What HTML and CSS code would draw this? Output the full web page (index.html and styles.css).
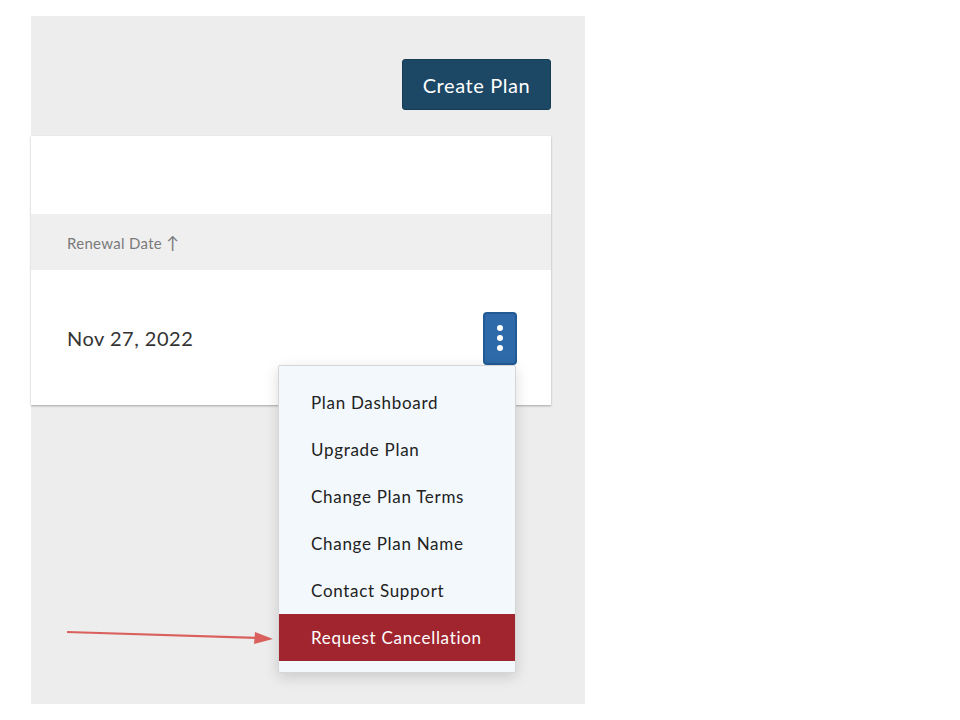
FILE: index.html
```html
<!DOCTYPE html>
<html lang="en">
<head>
    <meta charset="UTF-8">
    <meta name="viewport" content="width=device-width, initial-scale=1.0">
    <title>Plans</title>
    <link rel="stylesheet" href="styles.css">
</head>
<body>
    <div class="panel">
        <div class="toolbar">
            <button type="button" class="btn-create">Create Plan</button>
        </div>
        <div class="card">
            <div class="card-top"></div>
            <div class="head-row">
                <span class="col-date">Renewal Date <span class="sort">&#8593;</span></span>
            </div>
            <div class="body-row">
                <span class="date">Nov 27, 2022</span>
                <button type="button" class="kebab" aria-label="Actions">
                    <span class="dot"></span>
                    <span class="dot"></span>
                    <span class="dot"></span>
                </button>
                <ul class="menu">
                    <li class="menu-item">Plan Dashboard</li>
                    <li class="menu-item">Upgrade Plan</li>
                    <li class="menu-item">Change Plan Terms</li>
                    <li class="menu-item">Change Plan Name</li>
                    <li class="menu-item">Contact Support</li>
                    <li class="menu-item danger">Request Cancellation</li>
                </ul>
            </div>
        </div>
        <!-- annotation arrow -->
        <svg class="arrow" width="210" height="16" viewBox="0 0 210 16">
            <line x1="0" y1="3" x2="192" y2="9" stroke="#d9605c" stroke-width="2.2"/>
            <polygon points="188,3 206,10 187,15" fill="#d9605c"/>
        </svg>
    </div>
</body>
</html>
```

FILE: styles.css
```css
body{
    margin: 0;
    background: #fff;
    font-family: "Lato", "Open Sans", sans-serif;
}
.panel{
    position: relative;
    margin: 16px 0 0 31px;
    width: 554px;
    height: 688px;
    background-color: #ededed;
}
.toolbar{
    display: flex;
    justify-content: flex-end;
    padding: 43px 34px 0 0;
    height: 77px;
}
.btn-create{
    width: 149px;
    height: 51px;
    border: 1px solid #173d55;
    border-radius: 3px;
    background-color: #1c4866;
    color: #fff;
    font-family: inherit;
    font-size: 20px;
    letter-spacing: 0.6px;
}
.card{
    width: 520px;
    background: #fff;
    box-shadow: 0 1px 2px rgba(0,0,0,0.3);
}
.card-top{
    height: 78px;
}
.head-row{
    display: flex;
    align-items: center;
    height: 56px;
    padding-left: 36px;
    background-color: #efefef;
}
.col-date{
    color: #7a7a7a;
    font-size: 15px;
    letter-spacing: 0.3px;
}
.sort{
    font-size: 17px;
}
.body-row{
    position: relative;
    display: flex;
    align-items: center;
    justify-content: space-between;
    height: 135px;
    padding: 0 34px 0 36px;
}
.date{
    color: #333;
    font-size: 20px;
    letter-spacing: 0.5px;
}
.kebab{
    display: flex;
    flex-direction: column;
    align-items: center;
    justify-content: center;
    gap: 4px;
    width: 34px;
    height: 53px;
    margin-top: 1px;
    border: 2px solid #215a95;
    border-radius: 4px;
    background-color: #2e6aa9;
    padding: 0;
}
.dot{
    width: 6px;
    height: 6px;
    border-radius: 100%;
    background: #fff;
}
.menu{
    position: absolute;
    left: 247px;
    top: 95px;
    width: 236px;
    margin: 0;
    padding: 13px 0 11px;
    list-style: none;
    background-color: #f2f8fc;
    border: 1px solid #d6d6d6;
    border-radius: 2px;
    box-shadow: 0 4px 14px rgba(0,0,0,0.15);
    z-index: 10;
}
.menu-item{
    height: 47px;
    line-height: 47px;
    padding-left: 32px;
    color: #222;
    font-size: 17px;
    letter-spacing: 0.7px;
}
.menu-item.danger{
    background-color: #a0252f;
    color: #fff;
}
.arrow{
    position: absolute;
    left: 36px;
    top: 613px;
}
```
